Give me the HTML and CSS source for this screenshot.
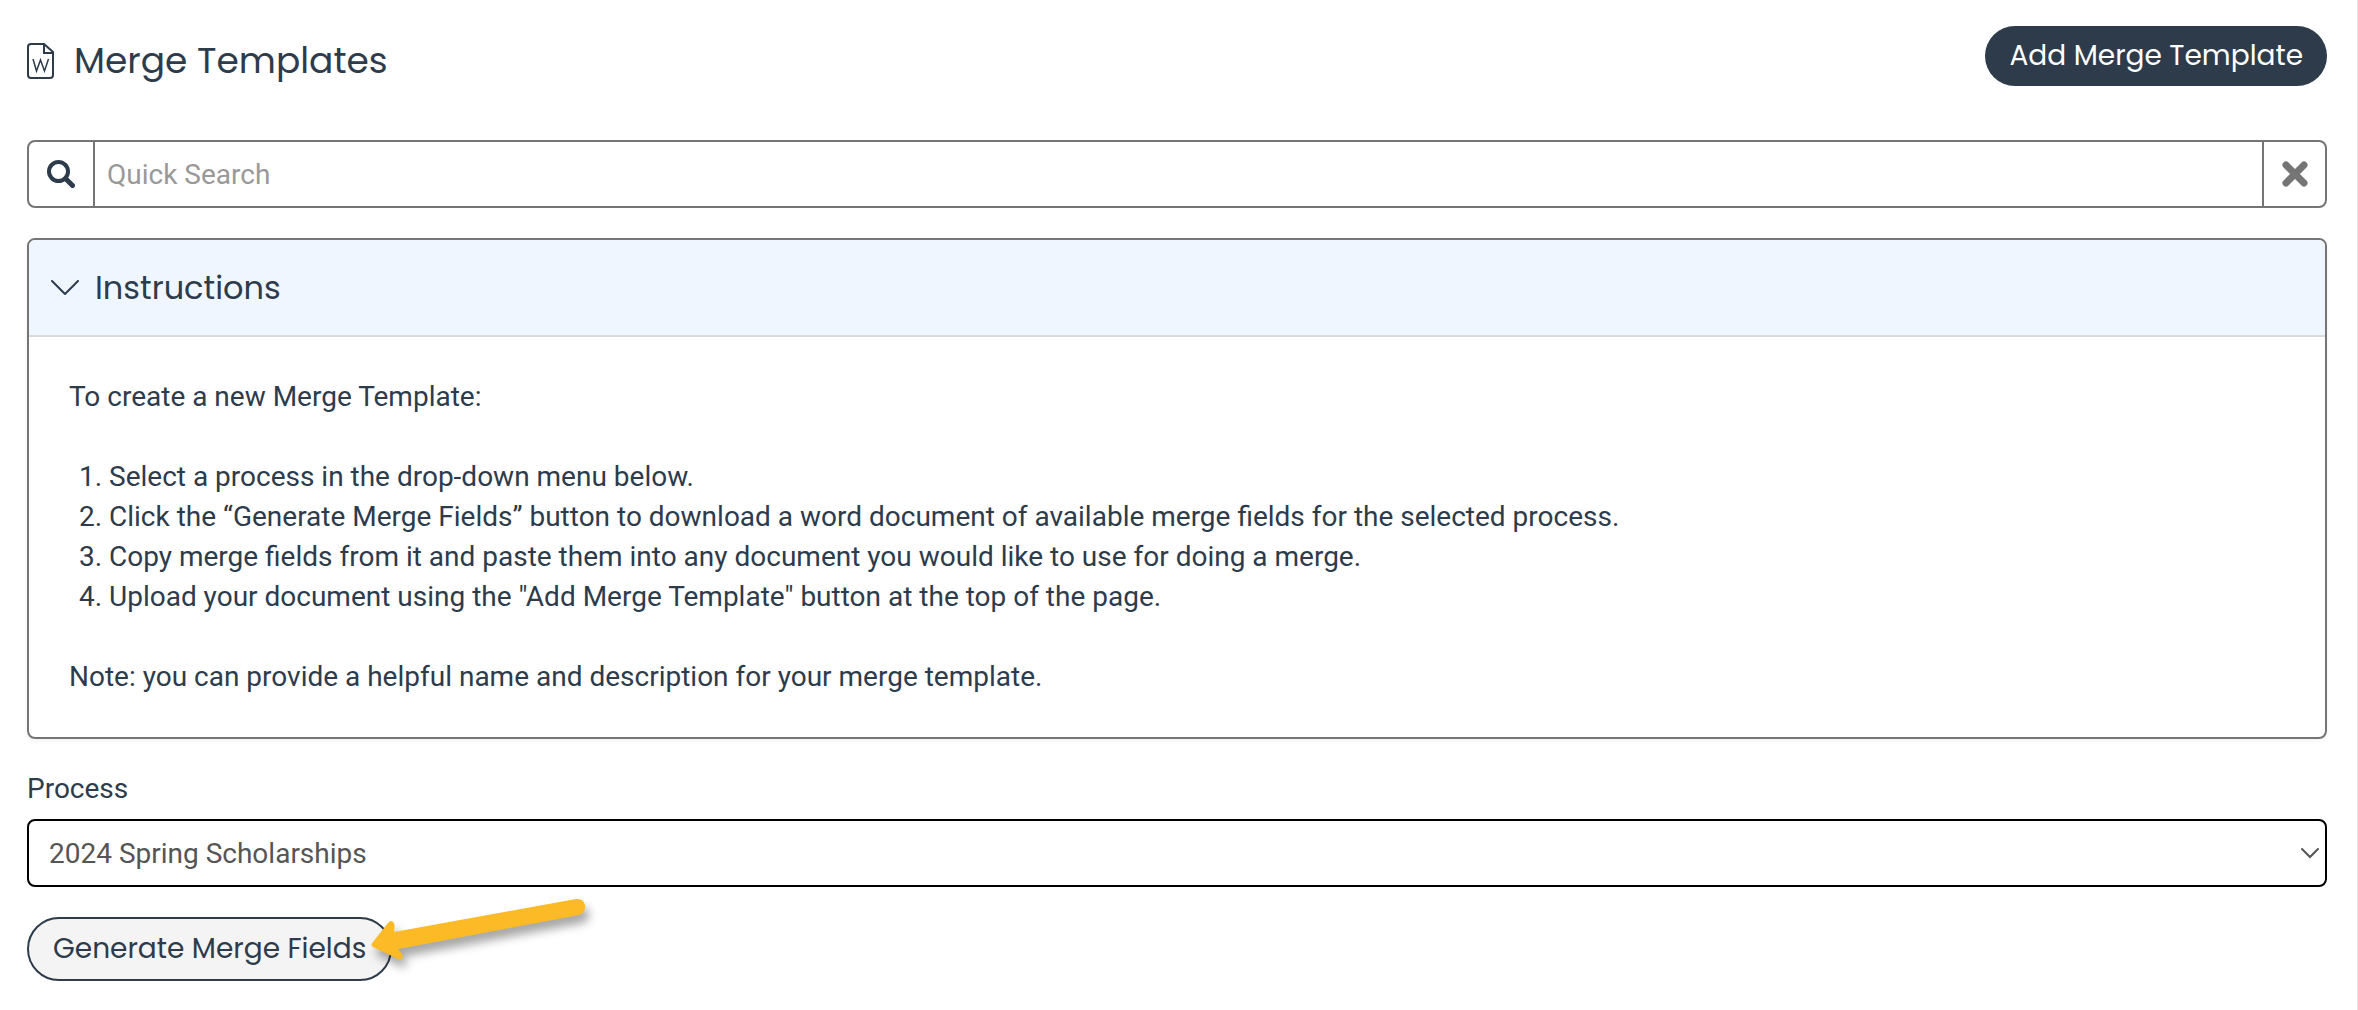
FILE: index.html
```html
<!DOCTYPE html>
<html lang="en">
<head>
    <meta charset="UTF-8">
    <meta name="viewport" content="width=device-width, initial-scale=1.0">
    <title>Merge Templates</title>
    <link rel="stylesheet" href="styles.css">
</head>
<body>

    <main class="page">
        <div class="header">
            <h1 class="title">
                <svg class="title-icon" viewBox="0 0 27 36" fill="none" stroke="currentColor" stroke-width="2" aria-hidden="true">
                    <path d="M17 1H4Q1 1 1 4V32Q1 35 4 35H23Q26 35 26 32V9Z"/>
                    <path d="M17 1V10H26"/>
                    <path d="M6 16L9.500 28L13.500 17L17.500 28L21.500 16" stroke-width="1.500"/>
                </svg>
                Merge Templates
            </h1>
            <button type="button" class="btn btn-primary">Add Merge Template</button>
        </div>

        <!-- Quick search -->
        <div class="search">
            <button type="button" class="search-btn" aria-label="Search">
                <svg width="28" height="28" viewBox="0 0 28 28" fill="none" stroke="currentColor" aria-hidden="true">
                    <circle cx="11.500" cy="11.500" r="9.500" stroke-width="4"/>
                    <path d="M18.500 18.500L25.500 25.500" stroke-width="5" stroke-linecap="round"/>
                </svg>
            </button>
            <input type="text" class="search-input" placeholder="Quick Search" aria-label="Quick Search">
            <button type="button" class="search-btn search-clear" aria-label="Clear search">
                <svg width="26" height="26" viewBox="0 0 26 26" fill="none" stroke="currentColor" aria-hidden="true">
                    <path d="M4 4L22 22M22 4L4 22" stroke-width="7" stroke-linecap="round"/>
                </svg>
            </button>
        </div>

        <!-- Instructions -->
        <details class="panel" open>
            <summary class="panel-header">
                <svg width="28" height="16" viewBox="0 0 28 16" fill="none" stroke="currentColor" stroke-width="2" stroke-linecap="round" stroke-linejoin="round" aria-hidden="true">
                    <path d="M1 1L14 14L27 1"/>
                </svg>
                Instructions
            </summary>
            <div class="panel-body">
                <p>To create a new Merge Template:</p>
                <ol>
                    <li>Select a process in the drop-down menu below.</li>
                    <li>Click the “Generate Merge Fields” button to download a word document of available merge fields for the selected process.</li>
                    <li>Copy merge fields from it and paste them into any document you would like to use for doing a merge.</li>
                    <li>Upload your document using the "Add Merge Template" button at the top of the page.</li>
                </ol>
                <p>Note: you can provide a helpful name and description for your merge template.</p>
            </div>
        </details>

        <label class="label" for="process">Process</label>
        <div class="select-wrap">
            <select id="process" class="select">
                <option selected>2024 Spring Scholarships</option>
            </select>
            <svg class="select-arrow" width="18" height="12" viewBox="0 0 18 12" fill="none" stroke="currentColor" stroke-width="2" stroke-linecap="round" aria-hidden="true">
                <path d="M1 2L9 10L17 2"/>
            </svg>
        </div>

        <div class="generate">
            <button type="button" class="btn btn-outline">Generate Merge Fields</button>
            <svg class="pointer" width="220" height="66" viewBox="0 0 220 66" aria-hidden="true">
                <path fill="#fbba26" d="M2 45L17 26Q20 22 23 26Q24 28 23 35L205 2Q212 1 214 8Q215 15 208 18L27 52L31 57Q34 63 27 62Q25 62 23 60L2 50Q-1 48 2 45Z"/>
            </svg>
        </div>
    </main>

</body>
</html>
```

FILE: styles.css
```css
* {
    box-sizing: border-box;
}
body {
    margin: 0;
    font-family: Roboto, "Liberation Sans", sans-serif;
    font-size: 28px;
    line-height: 40px;
    color: #2d3b4b;
    background-color: #fff;
}
.page {
    min-height: 100vh;
    padding: 26px 30px 28px 27px;
    border-right: 1px solid #e8e8ea;
}
.header {
    display: flex;
    justify-content: space-between;
    align-items: flex-start;
    margin-bottom: 44px;
}
.title {
    display: flex;
    align-items: center;
    gap: 20px;
    margin: 0;
    font-family: Poppins, Inter, sans-serif;
    font-size: 36px;
    font-weight: 400;
    line-height: 70px;
}
.title-icon {
    width: 27px;
    height: 36px;
}
.btn {
    font-family: Poppins, Inter, sans-serif;
    font-size: 28px;
    line-height: 40px;
    border-radius: 32px;
    cursor: pointer;
}
.btn-primary {
    height: 60px;
    padding: 0 24px;
    border: none;
    background-color: #2d3b4b;
    color: #fff;
}
.btn-outline {
    height: 64px;
    padding: 0 24px;
    border: 2px solid #2d3b4b;
    background-color: #f4f4f4;
    color: #2d3b4b;
}

/* Search bar */
.search {
    display: flex;
    height: 68px;
    margin-bottom: 30px;
    border: 2px solid #757575;
    border-radius: 8px;
    overflow: hidden;
}
.search-btn {
    display: flex;
    flex: none;
    align-items: center;
    justify-content: center;
    width: 64px;
    padding: 0;
    border: none;
    background: none;
    color: #2d3b4b;
    cursor: pointer;
}
.search-clear {
    width: 61px;
    color: #757575;
}
.search-input {
    flex: 1;
    min-width: 0;
    padding: 0 12px;
    border: solid #757575;
    border-width: 0 2px;
    font-family: inherit;
    font-size: 28px;
    color: #555;
    outline: none;
}
.search-input::placeholder {
    color: #999;
}

/* Instructions panel */
.panel {
    margin-bottom: 30px;
    border: 2px solid #757575;
    border-radius: 8px;
    box-shadow: 0 2px 4px rgba(0, 0, 0, 0.05);
    overflow: hidden;
}
.panel-header {
    display: flex;
    align-items: center;
    gap: 16px;
    height: 97px;
    padding: 0 22px;
    border-bottom: 2px solid #d9dbdd;
    background-color: #eff6ff;
    font-family: Poppins, Inter, sans-serif;
    font-size: 32px;
    cursor: pointer;
    list-style: none;
}
.panel-body {
    padding: 40px;
}
.panel-body p {
    margin: 0;
}
.panel-body ol {
    margin: 40px 0;
    padding-left: 40px;
}

/* Process select */
.label {
    display: block;
    margin-bottom: 10px;
}
.select-wrap {
    position: relative;
    margin-bottom: 30px;
}
.select {
    display: block;
    width: 100%;
    height: 68px;
    padding: 0 40px 0 20px;
    border: 2px solid #000;
    border-radius: 8px;
    background-color: #fff;
    font-family: inherit;
    font-size: 28px;
    color: #555;
    appearance: none;
}
.select-arrow {
    position: absolute;
    top: 28px;
    right: 8px;
    color: #555;
    pointer-events: none;
}

.generate {
    display: flex;
    position: relative;
}
/* Yellow arrow lying over the button */
.pointer {
    position: absolute;
    top: -20px;
    left: 344px;
    overflow: visible;
    filter: drop-shadow(4px 8px 5px rgba(0, 0, 0, 0.35));
    pointer-events: none;
}
```
